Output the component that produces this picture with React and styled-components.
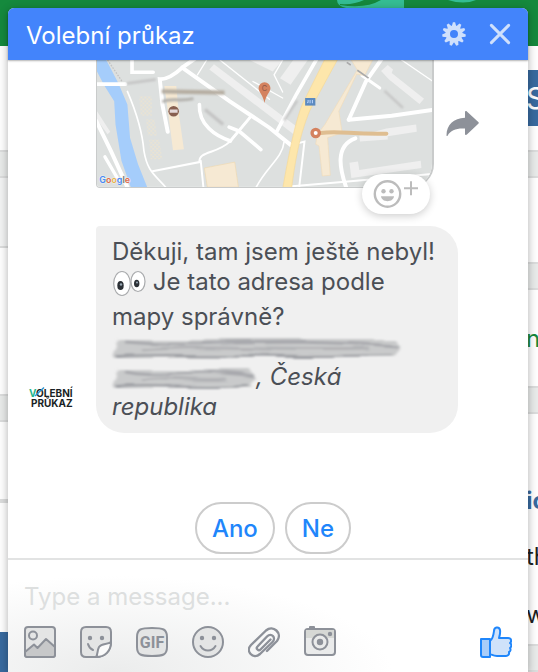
import React, { useState } from "react";
import styled, { createGlobalStyle } from "styled-components";

const GEAR_TEETH = 11;

function GearIcon() {
  const teeth = Array.from({ length: GEAR_TEETH }, (_, i) => (i * 360) / GEAR_TEETH);
  return (
    <svg width="24" height="24" viewBox="0 0 24 24" aria-hidden="true">
      <g fill="#cfe0fc">
        {teeth.map((angle) => (
          <path key={angle} d="M9.6 5 L10.9 .2 H13.1 L14.4 5 Z" transform={`rotate(${angle} 12 12)`} />
        ))}
      </g>
      <circle cx="12" cy="12" r="6.2" fill="none" stroke="#cfe0fc" strokeWidth="4.4" />
    </svg>
  );
}

function CloseIcon() {
  return (
    <svg width="24" height="24" viewBox="0 0 24 24" aria-hidden="true">
      <path d="M3.4 3.4 20.6 20.6 M20.6 3.4 3.4 20.6" stroke="#cfe0fc" strokeWidth="3" strokeLinecap="round" />
    </svg>
  );
}

function ShareIcon() {
  return (
    <svg width="34" height="28" viewBox="0 0 34 28" aria-hidden="true">
      <path
        d="M19 2.2c0-1.2 1-1.6 1.9-.8L32.3 12c.7.7.7 1.2 0 1.8L20.9 24.6c-.9.8-1.9.4-1.9-.8v-5.3C10.5 18 4.5 20 1.7 25.5c-.4.9-1.2.7-1.2-.3C.6 15 7.5 8.1 19 7.7z"
        fill="#8d9199"
      />
    </svg>
  );
}

function ReactIcon() {
  return (
    <svg width="46" height="30" viewBox="0 0 46 30" aria-hidden="true">
      <g fill="none" stroke="#bcbcbc">
        <circle cx="14.5" cy="15" r="12.7" strokeWidth="2.4" />
        <path d="M31 9.3h14M38 2.3v14" strokeWidth="2" />
      </g>
      <g fill="#bcbcbc">
        <circle cx="10.5" cy="12.3" r="2.2" />
        <circle cx="18.5" cy="12.3" r="2.2" />
        <path d="M8 17.3h13c-.2 3-3 4.9-6.5 4.9S8.2 20.3 8 17.3z" />
      </g>
    </svg>
  );
}

function MapDrawing() {
  return (
    <svg viewBox="18 15 1014 384" role="img" aria-label="Map">
      <defs>
        <filter id="smudge" x="-20%" y="-60%" width="140%" height="220%">
          <feGaussianBlur stdDeviation="3" />
        </filter>
        <pattern id="dots" width="12" height="12" patternUnits="userSpaceOnUse">
          <rect width="4" height="4" fill="#f6e6c8" />
          <rect x="6" y="6" width="4" height="4" fill="#f6e6c8" />
        </pattern>
      </defs>
      <rect x="18" y="15" width="1014" height="384" fill="#dde0df" />
      <path d="M18 170 L58 232 50 240 18 196z" fill="#efefef" />
      <path d="M10 15 H46 L82 84 110 150 118 250 142 330 172 405 H122 L92 320 74 210 70 140 40 92 18 50z" fill="#a5cdfb" />
      <path d="M372 28 L640 230 620 245 358 44z" fill="#efefef" />
      <path d="M480 15H580L550 50z" fill="#efefef" />
      <g fill="none" stroke="#fff" strokeLinecap="round">
        <path d="M18 88H104" strokeWidth="12" />
        <path d="M16 200 L60 290 110 400" strokeWidth="12" />
        <path d="M42 308 L84 380" strokeWidth="10" />
        <path d="M124 15V52H188" strokeWidth="11" />
        <path d="M330 0 L276 38 C250 62 230 74 208 73 L216 150 232 232" strokeWidth="12" />
        <path d="M276 38 L420 140 540 220 604 272" strokeWidth="12" />
        <path d="M110 110 C140 180 155 230 160 290 C170 350 190 360 226 400" strokeWidth="5" />
        <path d="M186 352 L328 324 C325 290 380 300 420 262 L482 188" strokeWidth="6" />
        <path d="M332 320 L340 400" strokeWidth="6" />
        <path d="M328 150 C325 210 375 245 422 260" strokeWidth="11" />
        <path d="M418 218 L448 230 514 286" strokeWidth="11" />
        <path d="M350 15 L322 60" strokeWidth="4" />
        <path d="M390 15 L540 134" strokeWidth="4" />
        <path d="M482 188 L420 262" strokeWidth="9" />
      </g>
      <g stroke="#c3c3c3" strokeWidth="4" fill="none">
        <path d="M50 15 L94 80" strokeDasharray="5 4" />
        <path d="M108 86 L196 74" strokeWidth="8" filter="url(#smudge)" />
        <path d="M345 165 L400 210" strokeWidth="10" filter="url(#smudge)" />
      </g>
      <g fill="url(#dots)">
        <path d="M146 124H184V184H150z" />
        <path d="M166 194H192L200 244H172z" />
        <path d="M176 256H206L216 316H180z" />
      </g>
      <path d="M222 94H258L266 180 281 285 248 288 234 180z" fill="#f6e9d3" />
      <path d="M343 342 L435 324 446 400H352z" fill="#f6e9d3" stroke="#efd9b2" strokeWidth="2" />
      <g filter="url(#smudge)" fill="none">
        <path d="M214 110 L404 114" stroke="#b5ada1" strokeWidth="13" />
        <path d="M216 142 C240 128 260 142 310 132" stroke="#b2b0ac" strokeWidth="9" />
      </g>
      <circle cx="250" cy="170" r="16" fill="#875f50" />
      <path d="M238 165h24v10h-24z" fill="#e4d9d9" />

      <g transform="translate(510 0)">
        <g fill="none" stroke="#fff" strokeLinecap="round">
          <path d="M180 0 L112 118 52 232" strokeWidth="11" />
          <path d="M70 15 L44 60 70 112" strokeWidth="4" />
          <path d="M-20 80 L70 130" strokeWidth="4" />
          <path d="M378 0 L322 80 270 196" strokeWidth="12" />
          <path d="M310 62 L364 100" strokeWidth="9" />
          <path d="M270 196 L400 184 522 166" strokeWidth="12" />
          <path d="M430 15 L522 78" strokeWidth="4" />
          <path d="M98 272 L136 262 120 400" strokeWidth="6" />
          <path d="M74 264 C70 310 20 340 -10 400" strokeWidth="5" />
          <path d="M290 252 C225 275 245 350 262 400" strokeWidth="12" />
          <path d="M90 398 L250 384 522 360" strokeWidth="6" />
        </g>
        <g fill="#efefef">
          <path d="M102 15H146L94 90 62 70z" />
          <path d="M368 48 L388 30 404 44 400 54 498 132 484 148 392 74z" />
          <path d="M384 222 L474 210 476 232 388 246 388 256 304 262 302 244z" />
          <path d="M272 326 L298 322 302 348 488 320 490 342 278 372z" />
        </g>
        <path d="M204 0 L130 148 C110 195 90 290 70 405 H97 C110 300 125 235 152 168 L238 10z" fill="#fde6ab" stroke="#f6d996" strokeWidth="2" />
        <path d="M278 15H342L318 62 294 58 240 170 250 235 206 250 214 364 190 366 180 275 170 270 175 240 198 210 296 45z" fill="#f6e9d3" stroke="#f1dcb9" strokeWidth="2" />
        <path d="M264 22 L276 30 M296 46 L330 70" stroke="#aaa" strokeWidth="5" />
        <rect x="138" y="130" width="31" height="23" fill="#5b8ac0" />
        <path d="M147 136v8h-3M153 136v10M160 136v10" stroke="#bcd7ff" strokeWidth="3" fill="none" />
        <g filter="url(#smudge)" stroke="#c3c3c3" strokeWidth="7">
          <path d="M74 198 L114 138" />
          <path d="M378 108 L434 160" />
        </g>
        <path d="M186 236 C240 228 280 241 384 238" stroke="#dfbe91" strokeWidth="12" strokeLinecap="round" fill="none" />
        <circle cx="170" cy="236" r="11" fill="#fff" stroke="#d4825f" strokeWidth="10" />
        <path d="M15 145C11 122 -3 112 -3 100a18 18 0 0 1 36 0c0 12-14 22-18 45z" fill="#d4825f" />
        <text x="15" y="108" textAnchor="middle" fontSize="22" fill="#8b5848">C</text>
      </g>
      <text x="25" y="388" fontSize="27" fontWeight="600" stroke="#eef0ef" strokeWidth="3" paintOrder="stroke">
        <tspan fill="#4a8af4">G</tspan>
        <tspan fill="#df6b4c">o</tspan>
        <tspan fill="#e9b44b">o</tspan>
        <tspan fill="#4a8af4">g</tspan>
        <tspan fill="#777">l</tspan>
        <tspan fill="#df6b4c">e</tspan>
      </text>
    </svg>
  );
}

function Eyes() {
  return (
    <EyesSvg width="34" height="28" viewBox="0 0 34 28" role="img" aria-label="eyes">
      <g fill="#fff" stroke="#a9abad" strokeWidth="1.2">
        <ellipse cx="10" cy="14.5" rx="8.3" ry="12" />
        <ellipse cx="26" cy="12.5" rx="7" ry="10" />
      </g>
      <ellipse cx="8.5" cy="16.5" rx="3.2" ry="4.6" fill="#2c3136" />
      <ellipse cx="24.7" cy="14.5" rx="2.7" ry="3.8" fill="#2c3136" />
      <circle cx="9" cy="15.5" r="1.2" fill="#99a8b5" />
      <circle cx="25" cy="13.5" r="1" fill="#99a8b5" />
    </EyesSvg>
  );
}

function Smear({ length }) {
  return (
    <SmearSvg width={length} height="24" viewBox={`0 0 ${length} 24`} aria-hidden="true">
      <defs>
        <filter id={`smear${length}`} x="-5%" y="-30%" width="110%" height="160%">
          <feTurbulence type="fractalNoise" baseFrequency="0.015 0.1" numOctaves="2" seed="4" />
          <feDisplacementMap in="SourceGraphic" scale="8" />
          <feGaussianBlur stdDeviation="1.5 0.9" />
        </filter>
      </defs>
      <g filter={`url(#smear${length})`}>
        <path d={`M6 4 H${length - 6} L${length - 1} 12 L${length - 5} 22 H0z`} fill="#c9cacb" />
        <path d={`M12 6 C${length / 3} 13 ${length / 2} 2 ${length - 2} 11`} stroke="#a8a9ad" strokeWidth="3" fill="none" />
        <path d={`M30 15 C${length / 3} 9 ${length / 2} 17 ${length - 30} 14`} stroke="#b2b3b6" strokeWidth="3" fill="none" />
        <path d={`M3 21 C${length / 3} 18 ${length / 2} 23 ${length - 8} 20`} stroke="#9c9ea3" strokeWidth="2" fill="none" />
      </g>
    </SmearSvg>
  );
}

function Logo() {
  return (
    <svg width="48" height="24" viewBox="0 0 48 24" role="img" aria-label="Volební průkaz">
      <g fontSize="10" fontWeight="700" fill="#191f24">
        <text x="1" y="12">
          <tspan fill="#27b58c">V</tspan>OLEBNÍ
        </text>
        <text x="3" y="22">PRŮKAZ</text>
      </g>
      <path d="M7 11 16 2.5" stroke="#2e91ce" strokeWidth="1.4" />
    </svg>
  );
}

const stroke = { fill: "#e4e5e5", stroke: "#8d9199", strokeWidth: 2, strokeLinejoin: "round", strokeLinecap: "round" };

const tools = [
  {
    name: "Add photos",
    icon: (
      <g {...stroke}>
        <rect x="1" y="1" width="30" height="30" rx="3" />
        <path d="M1 26 10 18.5 13.5 22 22 13 31 21V29q0 2-2 2H3q-2 0-2-2z" fill="#c7c8c9" />
        <circle cx="9" cy="9.5" r="4" />
      </g>
    ),
  },
  {
    name: "Stickers",
    icon: (
      <g {...stroke}>
        <path d="M6 1H26q5 0 5 5V16C31 25 25 31 16 31H6q-5 0-5-5V6q0-5 5-5z" />
        <path d="M16 31C18 28 17 25 19 21 22 17 27 19 31 16 31 25 25 31 16 31z" fill="#fbfbfb" />
        <path d="M8 18Q9 22 13 24" fill="none" />
        <circle cx="10" cy="12" r="1.2" fill="#8d9199" />
        <circle cx="22" cy="12" r="1.2" fill="#8d9199" />
      </g>
    ),
  },
  {
    name: "GIFs",
    icon: (
      <>
        <path {...stroke} d="M16 2c11 0 15 1 15 9v10c0 8-4 9-15 9S1 29 1 21V11c0-8 4-9 15-9z" />
        <text x="16" y="22" textAnchor="middle" fontFamily="Roboto, sans-serif" fontSize="16" fontWeight="700" fill="#8d9199">GIF</text>
      </>
    ),
  },
  {
    name: "Emoji",
    icon: (
      <g {...stroke}>
        <circle cx="16" cy="16" r="15" />
        <path d="M8.5 20C12 26 20 26 23.5 20" fill="none" />
        <circle cx="10" cy="12" r="1.2" fill="#8d9199" />
        <circle cx="22" cy="12" r="1.2" fill="#8d9199" />
      </g>
    ),
  },
  {
    name: "Attach files",
    icon: (
      <path
        {...stroke}
        strokeWidth="2.4"
        d="M22.5 13.5 12.5 23.5C10.5 25.5 7.5 22.5 9.5 20.5L19 10.5C23.5 6 28.5 12 24.5 16L12 28C5 34-3 25 3 19L18 4.5C25-1.5 35 7 29 15L19 25"
        fill="none"
      />
    ),
  },
  {
    name: "Take a photo",
    icon: (
      <g {...stroke}>
        <path d="M6 2V1h4v1" />
        <rect x="1" y="3" width="30" height="26" rx="3" fill="#eaebeb" />
        <path d="M2 4H30V12H2z" fill="#d6d8d5" stroke="none" />
        <circle cx="16" cy="16" r="7.5" fill="#eaebeb" />
        <circle cx="16" cy="16" r="2.2" fill="#8d9199" />
        <circle cx="26" cy="8" r="1.2" fill="#8d9199" />
      </g>
    ),
  },
];

function LikeIcon() {
  return (
    <svg width="32" height="32" viewBox="0 0 32 32" aria-hidden="true">
      <g stroke="#1f86fb" strokeWidth="2" strokeLinejoin="round">
        <path
          d="M10 15C13 13 13.5 9 14 5 14 1 19 0 20 4 20.5 7 20 9 19 12H28C32 12 31.500 16 30 17 32 18 31.5 21 30 22 31 23.5 30.5 25.5 29 26 29.5 28.5 28 30 26 30H17C14 30 12.5 29 10 28z"
          fill="#cfe2fa"
        />
        <path d="M1 13H10V31H3q-2 0-2-2z" fill="#a9cdf9" />
      </g>
    </svg>
  );
}

export default function App() {
  const [message, setMessage] = useState("");
  return (
    <Page>
      <GlobalStyle />
      <Backdrop aria-hidden="true">
        <SiteBar>
          <svg width="202" height="14" viewBox="0 0 202 14">
            <path d="M1 0H68V8H10Q1 6 1 0z" fill="#35be94" />
            <path d="M4 5Q30 9 45 0H28Q18 5 4 4z" fill="#15893d" />
            <path d="M112 0H140Q128 5 112 0z" fill="#35be94" />
          </svg>
        </SiteBar>
        <Strips>
          <Strip>
            <Block $h={104} />
            <Divider />
            <Block $h={68} $bg="#f3f4f4" />
            <Line $h={2} />
            <Block $h={146} />
            <Divider />
            <Block $h={77} />
            <Line $h={4} />
            <Block $h={129} />
            <Block $h={40} $bg="#386a9f" />
          </Strip>
          <Strip $right>
            <Block $h={24} />
            <Block $h={56} $bg="#386a9f" $color="#fff" $size={30}>S</Block>
            <Block $h={24} />
            <Divider />
            <Block $h={84} />
            <Divider />
            <Block $h={96} $color="#15893d" $size={24}>n</Block>
            <Divider />
            <Block $h={58} />
            <Block $h={56} $color="#386a9f" $size={24} $bold>ic</Block>
            <Block $h={56} $color="#1d1f22" $size={24}>th</Block>
            <Block $h={60} $color="#1d1f22" $size={24}>w</Block>
            <Divider />
          </Strip>
        </Strips>
      </Backdrop>

      <ChatWindow>
        <Header>
          <Title>Volební průkaz</Title>
          <IconButton aria-label="Settings"><GearIcon /></IconButton>
          <IconButton aria-label="Close"><CloseIcon /></IconButton>
        </Header>

        <Thread>
          <MapRow>
            <MapCard>
              <MapFrame><MapDrawing /></MapFrame>
              <Reaction aria-label="Add reaction"><ReactIcon /></Reaction>
            </MapCard>
            <IconButton aria-label="Share"><ShareIcon /></IconButton>
          </MapRow>
          <MessageRow>
            <Avatar><Logo /></Avatar>
            <Bubble>
              Děkuji, tam jsem ještě nebyl! <Eyes /> Je tato adresa podle mapy správně?
              <br />
              <em>
                <Smear length={288} />
                <br />
                <Smear length={144} />, Česká republika
              </em>
            </Bubble>
          </MessageRow>
          <QuickReplies>
            <QuickReply>Ano</QuickReply>
            <QuickReply>Ne</QuickReply>
          </QuickReplies>
        </Thread>

        <Composer>
          <MessageInput
            aria-label="Message"
            placeholder="Type a message..."
            value={message}
            onChange={(e) => setMessage(e.target.value)}
          />
          <Toolbar>
            {tools.map(({ name, icon }) => (
              <IconButton key={name} aria-label={name}>
                <svg width="32" height="32" viewBox="0 0 32 32">{icon}</svg>
              </IconButton>
            ))}
            <LikeButton aria-label="Send a like"><LikeIcon /></LikeButton>
          </Toolbar>
        </Composer>
      </ChatWindow>
    </Page>
  );
}

const GlobalStyle = createGlobalStyle`
  * {
    box-sizing: border-box;
  }
  body {
    margin: 0;
    font-family: Inter, "Liberation Sans", sans-serif;
  }
  button, input {
    font: inherit;
  }
  svg {
    font-family: Inter, sans-serif;
  }
`;

const Page = styled.div`
  position: relative;
  min-height: 100vh;
  padding: 8px 10px 0 8px;
  display: flex;
  overflow: hidden;
`;

const Backdrop = styled.div`
  position: absolute;
  inset: 0;
  overflow: hidden;
  background: #fff;
`;

const SiteBar = styled.div`
  height: 46px;
  background: #15893d;
  display: flex;
  justify-content: flex-end;
`;

const Strips = styled.div`
  display: flex;
  justify-content: space-between;
`;

const Strip = styled.div`
  width: ${({ $right }) => ($right ? 12 : 8)}px;
  overflow: hidden;
`;

const Block = styled.div`
  height: ${({ $h }) => $h}px;
  background: ${({ $bg }) => $bg || "#fff"};
  color: ${({ $color }) => $color};
  font-size: ${({ $size }) => $size}px;
  font-weight: ${({ $bold }) => ($bold ? 700 : 400)};
  display: flex;
  align-items: center;
`;

const Line = styled.div`
  height: ${({ $h }) => $h}px;
  background: #dcdddd;
`;

const Divider = styled.div`
  height: 28px;
  background: #e9ebea;
  border: solid #dcdddd;
  border-width: 2px 0;
`;

const ChatWindow = styled.main`
  position: relative;
  flex: 1;
  min-width: 0;
  display: flex;
  flex-direction: column;
  background: #fff;
  border-radius: 6px 6px 0 0;
  box-shadow: 0 2px 10px rgba(0, 0, 0, 0.32);
`;

const Header = styled.header`
  z-index: 1;
  height: 52px;
  padding: 0 16px 0 18px;
  display: flex;
  align-items: center;
  gap: 22px;
  background: #4384fb;
  border-radius: 6px 6px 0 0;
  box-shadow: 0 1px 2px rgba(0, 0, 0, 0.3);
`;

const Title = styled.h1`
  flex: 1;
  margin: 0;
  padding-top: 2px;
  color: #fff;
  font-size: 24px;
  font-weight: 400;
`;

const IconButton = styled.button`
  display: flex;
  padding: 0;
  border: none;
  background: none;
  cursor: pointer;
`;

const Thread = styled.section`
  flex: 1;
  display: flex;
  flex-direction: column;
`;

const MapRow = styled.div`
  display: flex;
  align-items: center;
  gap: 12px;
  padding: 0 0 0 88px;
`;

const MapCard = styled.div`
  position: relative;
  width: 338px;
`;

const MapFrame = styled.div`
  overflow: hidden;
  border-radius: 0 0 24px 4px;
  border: solid #c9cbcb;
  border-width: 0 2px 1px 1px;
  svg {
    display: block;
    width: 100%;
  }
`;

const Reaction = styled.button`
  position: absolute;
  right: 4px;
  bottom: -26px;
  width: 68px;
  height: 40px;
  padding: 0;
  display: flex;
  align-items: center;
  justify-content: center;
  border: none;
  border-radius: 20px;
  background: #fff;
  box-shadow: 0 2px 8px rgba(0, 0, 0, 0.2);
  cursor: pointer;
`;

const MessageRow = styled.div`
  display: flex;
  align-items: flex-end;
  margin-top: 38px;
`;

const Avatar = styled.div`
  width: 88px;
  padding: 0 20px 24px;
  svg {
    display: block;
  }
`;

const Bubble = styled.div`
  width: 362px;
  padding: 11px 16px;
  border-radius: 4px 28px 28px 28px;
  background: #f0f0f0;
  color: #4b4f56;
  font-size: 24px;
  line-height: 30px;
`;

/* the emoji makes its line a little taller than the others */
const EyesSvg = styled.svg`
  margin-bottom: 5px;
  vertical-align: -12px;
`;

const SmearSvg = styled.svg`
  vertical-align: -4px;
  overflow: visible;
`;

const QuickReplies = styled.div`
  display: flex;
  justify-content: center;
  gap: 10px;
  margin-top: auto;
  padding: 20px 0 4px 10px;
`;

const QuickReply = styled.button`
  height: 52px;
  padding: 0 15px;
  border: 2px solid #ccc;
  border-radius: 26px;
  background: #fff;
  color: #1f86fb;
  font-size: 24px;
  font-weight: 500;
  cursor: pointer;
`;

const Composer = styled.footer`
  padding: 20px 16px 14px;
  border-top: 2px solid #e2e3e3;
  background: radial-gradient(ellipse 280px 96px at 20% 100%, #ebecec, #fff);
`;

const MessageInput = styled.input`
  display: block;
  width: 100%;
  height: 32px;
  margin-bottom: 14px;
  padding: 0;
  border: none;
  outline: none;
  background: transparent;
  color: #4b4f56;
  font-size: 24px;
  &::placeholder {
    color: #dddfdf;
  }
`;

const Toolbar = styled.div`
  display: flex;
  gap: 24px;
`;

const LikeButton = styled(IconButton)`
  margin-left: auto;
`;
